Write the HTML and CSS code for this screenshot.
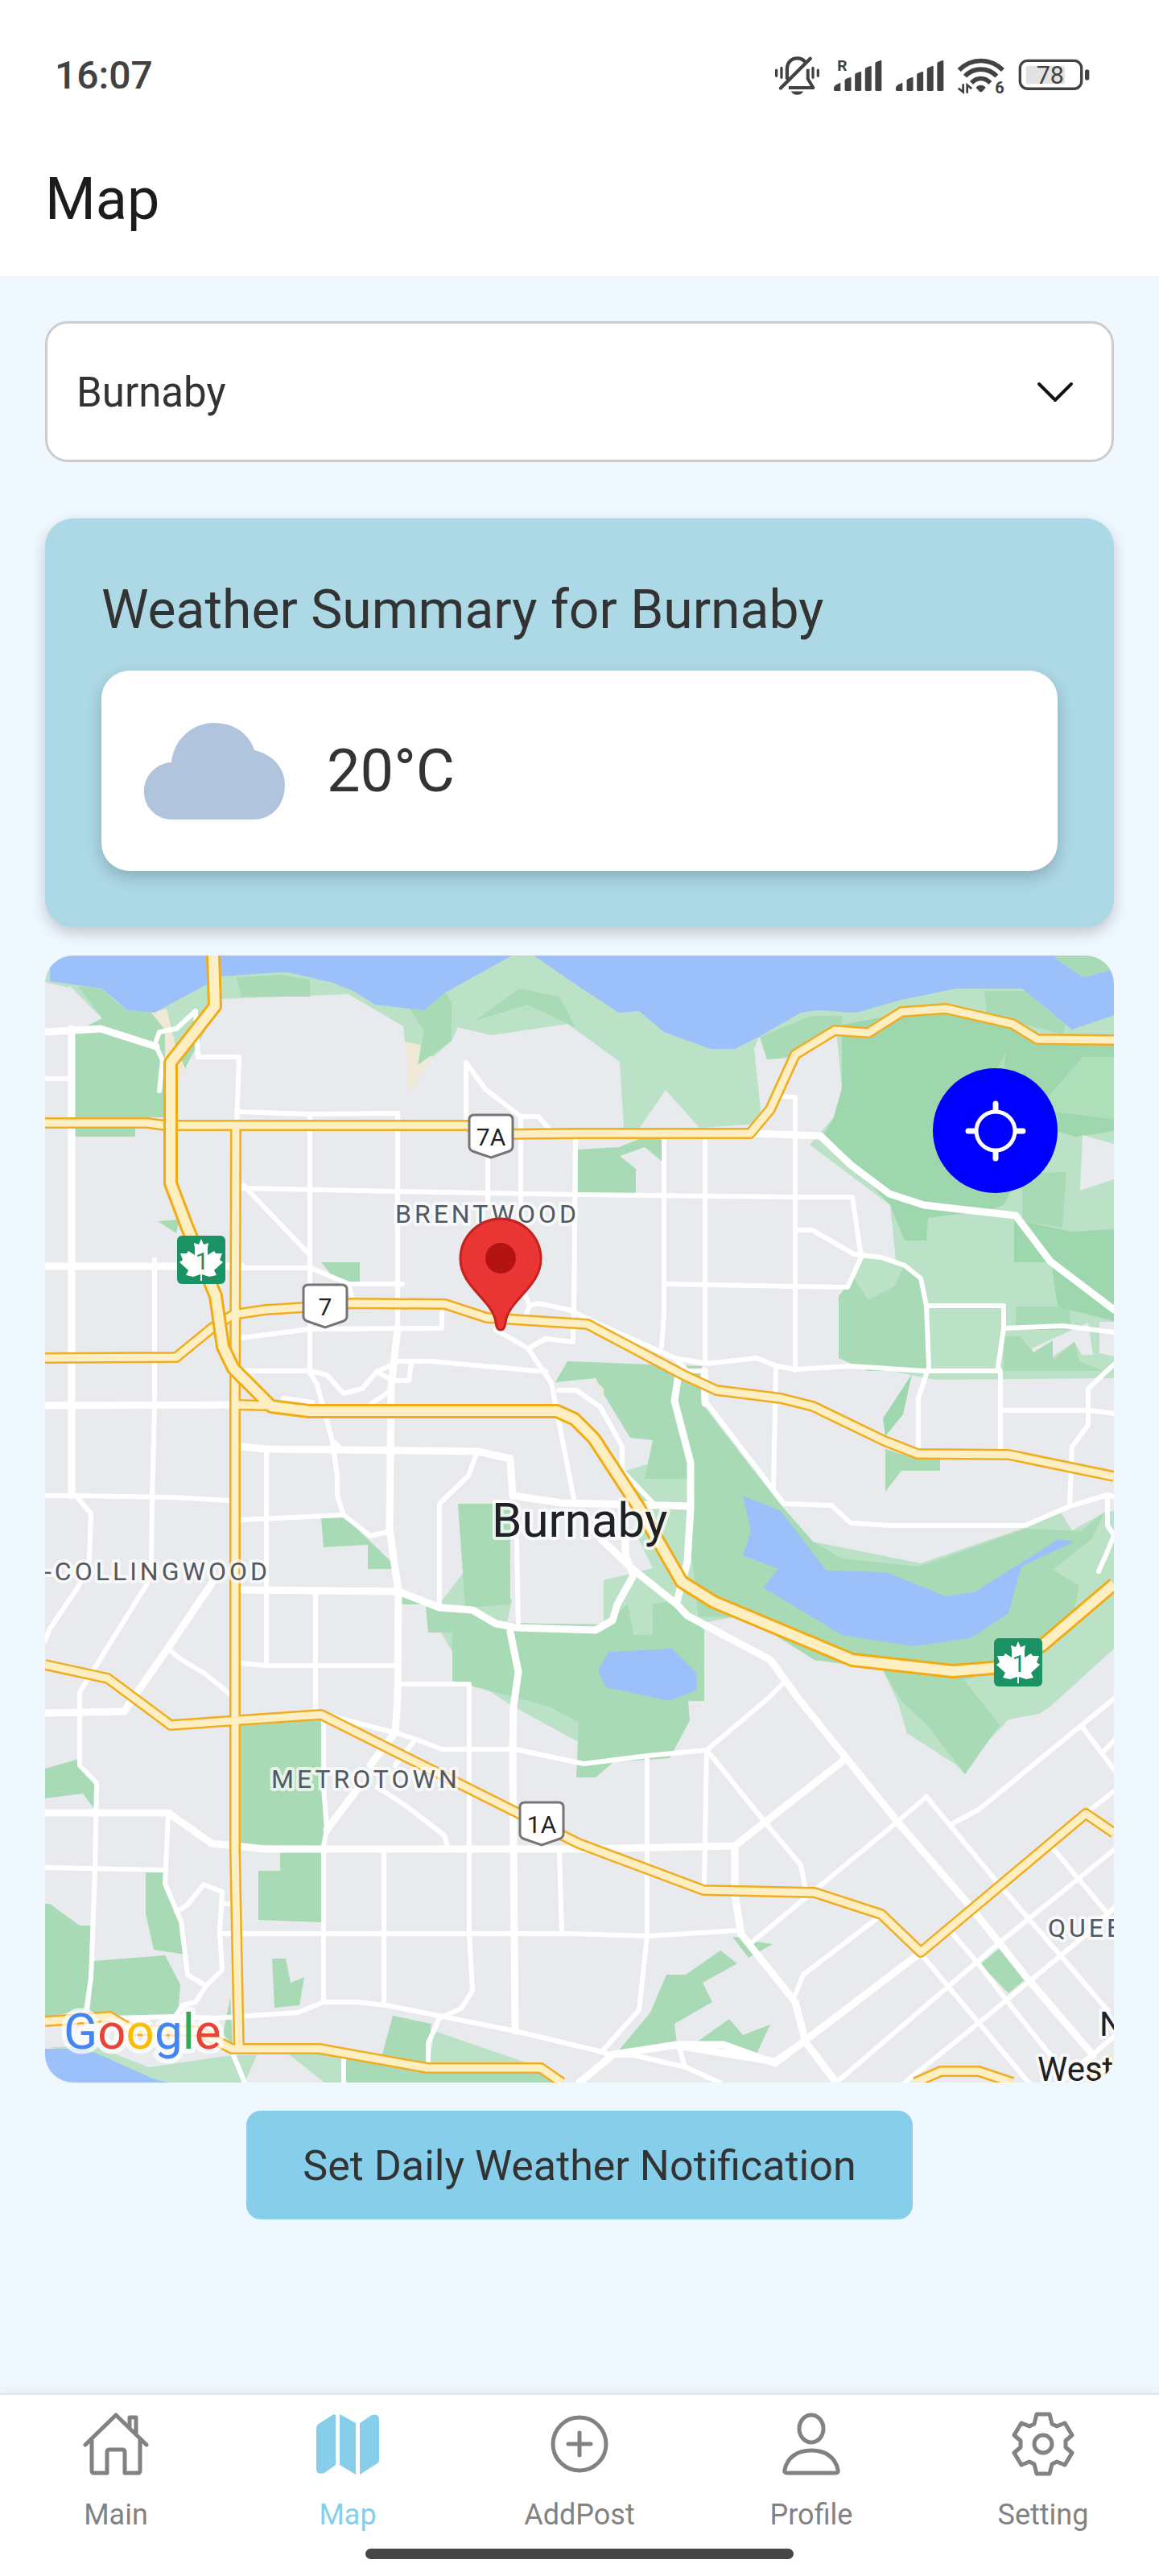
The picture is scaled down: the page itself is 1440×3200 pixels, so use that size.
FILE: index.html
```html
<!DOCTYPE html>
<html lang="en">
<head>
<meta charset="utf-8">
<meta name="viewport" content="width=device-width, initial-scale=1">
<title>Map</title>
<link rel="stylesheet" href="styles.css">
</head>
<body>
<div class="status-bar">
  <span class="status-time">16:07</span>
  <div class="status-icons">
    <svg class="status-icon" viewBox="64 58 172 150" width="57" height="50" aria-hidden="true">
      <g fill="none" stroke="#424242" stroke-linecap="round" stroke-linejoin="round">
        <path stroke-width="13" d="M112 142V108C112 84 128 68 150 68C163 68 173 73 180 82"/>
        <path stroke-width="13" d="M88 180L199 69"/>
        <path stroke-width="12" stroke-linecap="butt" d="M118 178H210L190 145V108"/>
        <path stroke-width="10" d="M72 112V134M91 104V140M209 104V140M228 112V134"/>
      </g>
      <path fill="#424242" d="M127 192H173C168 201 160 205 150 205S132 201 127 192Z"/>
    </svg>
    <svg class="status-icon" viewBox="286 58 184 150" width="61" height="50" aria-hidden="true">
      <text class="status-mini" x="302" y="115" font-size="58">R</text>
      <g fill="#424242">
        <path d="M289 182Q289 174 296 168L312 160Q314 159 314 162V190H293Q289 190 289 186Z"/>
        <path d="M330 152Q330 148 334 145L350 139Q354 138 354 142V186Q354 190 350 190H334Q330 190 330 186Z"/>
        <path d="M368 130Q368 126 372 124L388 118Q392 117 392 121V186Q392 190 388 190H372Q368 190 368 186Z"/>
        <path d="M406 109Q406 105 410 103L426 97Q430 96 430 100V186Q430 190 426 190H410Q406 190 406 186Z"/>
        <path d="M444 88Q444 84 448 82L464 76Q468 75 468 79V186Q468 190 464 190H448Q444 190 444 186Z"/>
      </g>
    </svg>
    <svg class="status-icon" viewBox="286 58 184 150" width="61" height="50" aria-hidden="true">
      <g fill="#424242">
        <path d="M289 182Q289 174 296 168L312 160Q314 159 314 162V190H293Q289 190 289 186Z"/>
        <path d="M330 152Q330 148 334 145L350 139Q354 138 354 142V186Q354 190 350 190H334Q330 190 330 186Z"/>
        <path d="M368 130Q368 126 372 124L388 118Q392 117 392 121V186Q392 190 388 190H372Q368 190 368 186Z"/>
        <path d="M406 109Q406 105 410 103L426 97Q430 96 430 100V186Q430 190 426 190H410Q406 190 406 186Z"/>
        <path d="M444 88Q444 84 448 82L464 76Q468 75 468 79V186Q468 190 464 190H448Q444 190 444 186Z"/>
      </g>
    </svg>
    <svg class="status-icon" viewBox="744 58 180 150" width="60" height="50" aria-hidden="true">
      <g fill="none" stroke="#424242" stroke-width="17">
        <path d="M752 112C798 66 868 66 915 112"/>
        <path d="M774 135C806 101 860 101 892 135"/>
        <path d="M798 160C818 138 848 138 868 160"/>
      </g>
      <path fill="#424242" d="M815 178C823 165 843 165 851 178L838 192Q833 196 828 192Z"/>
      <path fill="none" stroke="#424242" stroke-width="8" d="M767 164V194L749 180M782 198V168L799 182"/>
      <text class="status-mini" x="886" y="200" font-size="60">6</text>
    </svg>
    <svg class="status-icon" viewBox="976 58 268 150" width="89" height="50" role="img" aria-label="Battery">
      <rect x="1005" y="96" width="146" height="68" rx="10" fill="#e2e2e2"/>
      <rect x="983" y="77" width="230" height="105" rx="28" fill="none" stroke="#424242" stroke-width="10"/>
      <rect x="1226" y="110" width="16" height="40" rx="8" fill="#424242"/>
      <text class="status-level" x="1096" y="162" font-size="92" text-anchor="middle">78</text>
    </svg>
  </div>
</div>

<header class="page-header">
  <h1 class="page-title">Map</h1>
</header>

<main class="content">
  <div class="city-picker">
    <select class="city-select" aria-label="City">
      <option>Burnaby</option>
    </select>
    <svg class="city-chevron" viewBox="0 0 48 30" width="48" height="30" aria-hidden="true">
      <path d="M4 4L24 24L44 4" fill="none" stroke="#111" stroke-width="4" stroke-linecap="round" stroke-linejoin="round"/>
    </svg>
  </div>

  <section class="weather-card">
    <h2 class="weather-title">Weather Summary for Burnaby</h2>
    <div class="weather-now">
      <svg class="weather-icon" viewBox="0 0 175 120" width="175" height="120" aria-hidden="true">
        <path fill="#b0c4de" d="M34 120A34 34 0 0 1 0 84C0 67 14 50 34 49C37 20 60 0 87 0C112 0 131 14 137 34C160 39 175 56 175 77C175 101 160 120 136 120Z"/>
      </svg>
      <span class="weather-temp">20°C</span>
    </div>
  </section>

  <div class="map">
    <svg class="map-canvas" viewBox="0 0 1328 1400" role="img" aria-label="Map of Burnaby">
      <defs>
        <g id="hwy-trans-canada">
          <rect width="60" height="60" rx="6" fill="#1b9263"/>
          <path fill="#fff" d="M30 4L33 11L39 9L38 15L38 24L46 19L48 22L56 22L53 30L57 33L46 43L49 49L40 51L31 48V56H29V48L20 51L11 49L14 43L3 33L7 30L4 22L12 22L14 19L22 24L22 15L21 9L27 11Z"/>
        </g>
        <path id="hwy-shield" d="M7 1H49Q55 1 55 7V40Q55 44 51 46L28 54L5 46Q1 44 1 40V7Q1 1 7 1Z"/>
        <g id="yellow-roads">
          <path d="M0 208H127L149 211H524L560 222L664 221H876L901 191L932 123L981 93L1023 96L1064 70L1119 66L1202 85L1233 104L1328 105"/>
          <path d="M237 213L236 560V1110L238 1216L241 1360"/>
          <path d="M0 500L163 499L207 463L234 446L274 440L323 437L381 432L497 433L549 450L674 458L793 521L834 540L914 550L954 560L1043 603L1084 619L1197 620L1328 647"/>
          <path d="M236 558L274 559"/>
          <path d="M0 881L78 898L156 956L343 943L587 1065L663 1103L818 1161L956 1164L1039 1191L1088 1238L1293 1066L1328 1090"/>
          <path d="M0 1324L80 1318L109 1335L189 1336L232 1358H341L475 1382H616L642 1400"/>
          <path d="M1081 1400L1113 1386H1160L1202 1400M1328 1371L1296 1398"/>
        </g>
        <path id="freeway" d="M209 0L211 63L156 133V283L176 336L212 423L221 486L234 513L281 560L328 566H636L658 576L682 600L738 686L791 778L831 803L1003 875L1128 889L1200 883L1240 856L1328 781"/>
      </defs>

      <rect width="1328" height="1400" fill="#e8eaed"/>

      <g fill="#bbe2c6">
        <path d="M0 0H30V40L0 33ZM27 34L71 41L102 68L136 71L203 35L214 60L205 83L174 140L150 110L71 78Z"/>
        <path d="M218 20L300 18L410 50L580 0H610L690 30L860 100L887 101L881 116L889 191L887 209L813 214L771 167L738 215H719L714 132L684 110L649 85L554 99L513 89L505 106L482 126L447 107L445 88L377 48L218 54Z"/>
        <path d="M887 101L939 65L1132 35H1328V525L1106 527L1008 508L986 500V423L997 413L1012 376L1057 378L1050 310L950 235L980 201L990 165L983 93L923 127L897 129Z"/>
        <path d="M718 641L755 630L810 640V830L856 822L905 843L956 875L1041 888L1059 926L1071 966L1133 1006L1143 1017L1148 1001L1197 949L1235 942L1249 933L1328 861V690L1316 692L1276 714L1262 692L1213 712L1088 755L954 728L900 700L830 700L800 880H694V776L755 761L738 726Z"/>
        <path d="M492 803L520 766L580 800L574 830L700 830V850H506V865L492 841ZM551 913L580 932L661 976L680 930Z"/>
        <path d="M6 1356L62 1355L129 1381L232 1366H263L248 1400H130ZM303 1365H372V1400H347ZM484 1336L600 1376H477Z"/>
      </g>

      <g fill="#a8dab5">
        <path d="M41 38L71 41L91 60L102 68L132 71L149 93V201H37V91L51 88L71 78ZM37 214H112V225H37ZM186 90L203 80L174 140L166 120Z"/>
        <path d="M238 27L292 24L329 30V51H244ZM453 66L497 46L505 58V106L463 136L471 93ZM534 81L589 41L639 51L659 89L599 61Z"/>
        <path d="M1255 0H1328V17L1290 27L1255 3ZM889 101L952 75H990V86L941 125L897 129ZM1167 44H1218L1268 86L1264 98L1170 73Z"/>
        <path d="M662 241L713 238L738 228H767V256L745 238L714 249L734 265V295H662ZM140 330L167 328L163 345ZM343 381H391V406H363Z"/>
        <path d="M1004 400L1023 428L1055 411L1068 385L1088 400L1096 433L1098 516H1023L986 500V423ZM1206 436H1272L1275 465H1206ZM1191 473H1211L1228 493L1252 478V503L1279 480L1285 504L1314 516H1191ZM1214 271L1269 269L1264 338L1214 330Z"/>
        <path d="M649 504L634 530L684 525L694 545L727 599L755 602L745 650H800V730L807 773L811 821L856 822L905 843L956 875L1000 880L1041 888L1064 926L1095 955L1143 1017L1186 956L1142 900L1235 870L1278 816L1285 783L1252 763L1300 725L1316 692L1287 715L1218 712L1115 749L1085 759L990 749L954 728L912 680L816 556V510L751 508Z"/>
        <path d="M343 698L371 696L430 753V762H401V732L346 735ZM442 795L450 790L473 806H442ZM513 681H578V806L522 810Z"/>
        <path d="M473 808L531 813L560 828L684 832L694 830L724 806L731 844H755V806L785 800L819 838V926H799L801 950L776 997L706 1002L684 1021H660L663 953L627 933L551 913L506 901V841H476Z"/>
        <path d="M1044 613L1066 620L1112 625V640H1064L1044 666Z"/>
        <path d="M0 1010L42 998L62 1026L61 1060L47 1041L0 1047ZM243 953L343 950L345 1033L350 1086L345 1106L243 1105ZM292 1113H345V1201L265 1198V1137H292Z"/>
        <path d="M125 1139H149V1155L169 1200L174 1241L135 1235L125 1190ZM0 1178H6L43 1205H57V1266L51 1310L0 1318ZM61 1249L149 1242L168 1278L165 1316L55 1318ZM282 1246H299L305 1276L322 1269L316 1304L285 1307Z"/>
        <path d="M372 1373L375 1363L475 1386H616L631 1400H372ZM432 1317L480 1327L475 1376L419 1365ZM230 1295L233 1353L221 1340Z"/>
        <path d="M854 1219L865 1220L883 1225L904 1228L874 1245ZM839 1236L860 1252L817 1276L829 1300L782 1327L785 1351L713 1360L752 1313L772 1266H796ZM850 1321L867 1341L901 1328L884 1364L845 1351H808ZM1186 1233L1219 1271L1197 1289L1162 1253Z"/>
      </g>

      <g fill="#9ed7ae">
        <path d="M990 86L1064 72L1119 66L1202 85L1233 104L1328 105V126H1289L1247 175L1244 193L1328 203V218L1280 225L1240 213L1191 310L1175 316L1097 326L1095 354H1068L1050 310L968 221L980 201L990 165Z"/>
        <path d="M1204 328L1276 343L1328 340V454L1273 440L1258 435L1250 381H1204ZM1077 520L1066 570L1044 597L1041 575Z"/>
        <path fill="#aedfb9" d="M1289 126H1328V203L1244 193L1247 175ZM1194 120L1191 145H1180Z"/>
      </g>

      <g fill="#e8eaed">
        <path d="M1289 223L1328 234V278L1286 292ZM1226 488L1296 456L1302 496H1288L1279 480L1252 498V478L1228 493ZM1310 455H1328V498L1310 494Z"/>
      </g>

      <path fill="#f0e9d8" d="M132 71L151 66L163 116L174 140L163 163L149 160V92ZM447 107L467 111L463 136L482 126L453 170ZM680 524L694 538V548Z"/>

      <g fill="#9cc0f9">
        <path d="M6 0V32L71 41L102 68L136 71L203 35L218 26L288 21H303L357 34L381 43L410 61L471 68L497 46L580 0Z"/>
        <path d="M607 0L664 39L713 71L738 69L769 95L827 116H857L887 101L939 71L961 68L1008 71L1064 55L1132 41H1214L1276 92L1328 74V17L1290 27L1255 3V0Z"/>
        <path d="M700 865L779 861L809 891V912L776 926L697 909L687 888Z"/>
        <path d="M867 671L914 690L971 764L1045 766L1119 796L1156 790L1259 725L1279 728L1213 759L1197 817L1150 848L1079 858L990 844L892 785L911 762L867 745L877 715Z"/>
        <path d="M0 1358H51L62 1363L136 1396L154 1400H0Z"/>
      </g>

      <g class="street">
        <path d="M138 106L142 95L163 91L187 69L190 126H241L238 213M138 113L146 130L142 168M0 153H33"/>
        <path d="M238 194L328 197L438 196V463M329 197V518L338 533L357 603L363 646V671L371 695L404 721L430 715"/>
        <path d="M523 211V133L547 166L591 200H613L627 216M591 200V310M550 245V310M244 289L438 293L662 297L932 300H1003L1014 375L997 412L932 411L769 408"/>
        <path d="M659 225L657 450M247 286L328 371M244 388H330L377 408H444M377 408L383 430M136 378V560L133 673L132 753L127 780L43 915V1006L64 1028L62 1136L57 1270L51 1311"/>
        <path d="M769 228V446L766 486M820 228V506M916 175L932 176V515M932 341H953L1005 371L1039 375L1068 385L1088 401L1095 435L1098 511L1085 550V613"/>
        <path d="M1095 435H1191V463L1184 511L1187 517V613M1191 463L1265 460L1328 468M1187 565H1298L1328 569M1328 508L1296 538V583L1276 610L1273 683"/>
        <path d="M596 420L602 435L613 432L651 440L684 456L722 473L782 500L822 507L884 500L909 510L932 514L1001 510L1092 516H1186M602 435L596 450M782 500L798 516"/>
        <path d="M243 475L329 464L493 463V443M243 516H329L350 521L371 544L394 538L412 517L440 504H479L622 517M455 506L452 528H432L412 517M296 550L332 555M426 543L406 556M357 603L367 612"/>
        <path d="M560 465L600 488L629 531L658 680M600 488L622 476L656 480V466M638 540H660L690 561L717 610V640L758 683"/>
        <path d="M0 671H38L158 673L230 677M38 671L57 693L55 750L42 783L6 836L0 851M537 616L526 646L490 681V806M275 613V880M243 701L371 695M243 879L274 882H437M336 790V943"/>
        <path d="M439 905H527V1113V1213L531 1286L517 1308L490 1320L476 1351V1376M586 725L588 836M153 861L167 873L200 893L230 918"/>
        <path d="M153 1065L149 1153L169 1200L177 1266L200 1280L220 1260L217 1213L220 1163L197 1154L176 1180L163 1188M220 1178H236M200 1280L187 1300L171 1304L163 1316M0 1133L149 1136M220 1215H645L684 1216L749 1218L863 1211"/>
        <path d="M346 950V1033L350 1086L346 1106V1300M421 1113V1301M639 1113L642 1213M80 1320L163 1318L212 1320L314 1313L346 1300H386L424 1304L584 1336L684 1360L706 1366H731L796 1381L838 1400"/>
        <path d="M348 943L437 966L459 973L493 986H584L669 1004L749 994L822 987L898 923L918 903M459 975L435 1006M413 1033L448 1056L496 1093L500 1106M748 994V1218L738 1310L693 1360M822 987L819 1153M822 987L894 1076L939 1130L944 1156"/>
        <path d="M878 1226L1059 1076L1095 1045L1182 1150L1320 1310M1128 1078L1160 1061L1328 923M1287 956L1328 1011M1314 990L1328 975M1300 1060L1328 1038M1035 1195L942 1266L932 1291M1088 1240L1222 1400"/>
        <path d="M1126 1213L1160 1253L1193 1296L1249 1366M983 1400L1186 1226L1328 1111M1068 1400L1160 1326L1289 1220L1328 1183M1253 1110L1320 1190M1328 1343L1260 1400M787 1353L795 1381M234 1366L248 1400M371 1371V1400M684 1383L665 1400"/>
        <path d="M908 511L905 663M793 516H818L820 553L918 681L977 683L1001 705L1050 708H1218L1273 684L1320 670L1328 672M1320 670V708L1328 720L1320 740L1309 765"/>
      </g>
      <g class="street street-wide">
        <path d="M33 91V671M0 95L69 91L138 113M0 386H244M880 221L963 224L1001 260L1049 296L1092 310L1206 323L1249 380L1328 440"/>
        <path d="M438 463L430 536L428 713L439 790L438 923L435 965L404 1006M390 1033L350 1086M0 559L230 558"/>
        <path d="M243 610L274 613L537 616L578 625L581 671L642 680L684 681L802 684M243 788L439 790L490 810L531 813L560 830L587 835L684 838L705 826L711 806L731 770L721 746V723"/>
        <path d="M578 840L588 890L582 933L581 990L584 1336M207 780L153 860L104 930L99 939L0 941M0 1065H153L207 1103L274 1110H667L857 1106L992 1000M857 1106V1166L865 1216L932 1300L945 1350L983 1400"/>
        <path d="M691 725L731 763L785 806L798 820L901 875L936 923L1059 1076L1151 1183L1220 1270L1302 1366M787 520L782 553L802 630V686L798 753L785 803M819 516L820 556"/>
        <path d="M1086 1240L907 1376L843 1353H785L706 1365L664 1400M785 1354L907 1374L945 1348"/>
      </g>

      <use href="#yellow-roads" class="road-casing"/>
      <use href="#yellow-roads" class="road-fill"/>
      <use href="#freeway" class="freeway-casing"/>
      <use href="#freeway" class="freeway-fill"/>
      <path class="road-link" d="M240 558L276 559"/>

      <g transform="translate(164 348)"><use href="#hwy-trans-canada"/><text class="shield-text shield-green" x="31" y="42">1</text></g>
      <g transform="translate(1179 848)"><use href="#hwy-trans-canada"/><text class="shield-text shield-green" x="31" y="42">1</text></g>
      <g transform="translate(526 197)"><use href="#hwy-shield" class="shield"/><text class="shield-text" x="28" y="39">7A</text></g>
      <g transform="translate(320 408)"><use href="#hwy-shield" class="shield"/><text class="shield-text" x="28" y="39">7</text></g>
      <g transform="translate(589 1051)"><use href="#hwy-shield" class="shield"/><text class="shield-text" x="28" y="39">1A</text></g>

      <text class="area-label" x="435" y="332">BRENTWOOD</text>
      <text class="area-label" x="-1" y="776">-COLLINGWOOD</text>
      <text class="area-label" x="281" y="1034">METROTOWN</text>
      <text class="area-label" x="1246" y="1219">QUEE</text>
      <text class="city-label" x="555" y="722">Burnaby</text>
      <text class="town-label" x="1310" y="1342">N</text>
      <text class="town-label" x="1233" y="1398">West</text>

      <g class="pin">
        <path fill="#ea3535" stroke="#c5221f" stroke-width="3" d="M566 465C562 465 561 462 560 456C557 428 516 412 516 377A50 50 0 0 1 616 377C616 412 575 428 572 456C571 462 570 465 566 465Z"/>
        <circle cx="566" cy="376" r="19" fill="#b31412"/>
      </g>

      <text class="map-brand" x="23" y="1358"><tspan fill="#4285f4">G</tspan><tspan fill="#ea4335">o</tspan><tspan fill="#fbbc04">o</tspan><tspan fill="#4285f4">g</tspan><tspan fill="#34a853">l</tspan><tspan fill="#ea4335">e</tspan></text>
    </svg>
    <button class="locate-button" type="button" aria-label="My location">
      <svg viewBox="-39 -39 78 78" width="78" height="78" aria-hidden="true">
        <circle r="24" fill="none" stroke="#fff" stroke-width="5"/>
        <path d="M0 -34V-26M0 34V26M-34 0H-26M34 0H26" stroke="#fff" stroke-width="7" stroke-linecap="round"/>
      </svg>
    </button>
  </div>

  <button class="notify-button" type="button">Set Daily Weather Notification</button>
</main>

<footer class="tab-bar">
  <nav class="tabs" aria-label="Primary">
    <a class="tab" href="#main">
      <svg class="tab-icon" viewBox="0 0 82 82" width="82" height="82" aria-hidden="true">
        <path d="M3 42L41 5L79 42M11 35V74Q11 77 14 77H30V51Q30 48 33 48H49Q52 48 52 51V77H68Q71 77 71 74V35M58 20V8H66V28"/>
      </svg>
      Main
    </a>
    <a class="tab tab-active" href="#map" aria-current="page">
      <svg class="tab-icon tab-icon-solid" viewBox="0 0 78 82" width="78" height="82" aria-hidden="true">
        <path d="M3 16L20 5Q24 3 24 6V67L10 77Q0 80 0 72V21Q0 18 3 16ZM29 4L49 15V79L29 67ZM54 15L69 5Q78 3 78 11V63L76 65L54 79Z"/>
      </svg>
      Map
    </a>
    <a class="tab" href="#add-post">
      <svg class="tab-icon" viewBox="-41 -41 82 82" width="82" height="82" aria-hidden="true">
        <circle r="33"/><path d="M-14 0H14M0 -14V14"/>
      </svg>
      AddPost
    </a>
    <a class="tab" href="#profile">
      <svg class="tab-icon" viewBox="-41 -41 82 82" width="82" height="82" aria-hidden="true">
        <ellipse cy="-19" rx="15" ry="17"/>
        <path d="M-30 36Q-34 36 -33 32C-30 17 -18 8 0 8S30 17 33 32Q34 36 30 36Z"/>
      </svg>
      Profile
    </a>
    <a class="tab" href="#setting">
      <svg class="tab-icon" viewBox="-41 -41 82 82" width="82" height="82" aria-hidden="true">
        <path d="M-8 -37H8L11 -25L17 -22L27 -26L36 -11L28 -4V4L36 11L27 26L17 22L11 25L8 37H-8L-11 25L-17 22L-27 26L-36 11L-28 4V-4L-36 -11L-27 -26L-17 -22L-11 -25Z"/>
        <circle r="11"/>
      </svg>
      Setting
    </a>
  </nav>
  <div class="home-indicator"></div>
</footer>
</body>
</html>
```
FILE: styles.css
```css
* {
  box-sizing: border-box;
}

body {
  margin: 0;
  min-height: 100vh;
  display: flex;
  flex-direction: column;
  background: #f0f8ff;
  color: #333;
  font-family: Roboto, "Noto Sans", sans-serif;
}

button,
select {
  font: inherit;
  color: inherit;
}

.status-bar {
  display: flex;
  align-items: center;
  justify-content: space-between;
  padding: 64px 86px 0 68px;
  background: #fff;
}

.status-time {
  font-size: 48px;
  line-height: 60px;
  font-weight: 500;
  color: #424242;
}

.status-icons {
  display: flex;
  align-items: center;
  gap: 16px;
}

.status-icon {
  display: block;
}

.status-mini {
  fill: #424242;
  font-weight: 700;
}

.status-level {
  fill: #424242;
}

.page-header {
  padding: 82px 56px 53px;
  background: #fff;
}

.page-title {
  margin: 0;
  font-size: 72px;
  line-height: 84px;
  font-weight: 400;
  color: #1c1c1e;
}

.content {
  flex: 1;
  display: flex;
  flex-direction: column;
  padding: 56px;
}

.city-picker {
  position: relative;
  margin-bottom: 70px;
}

.city-select {
  display: block;
  width: 100%;
  height: 175px;
  padding: 2px 120px 0 36px;
  border: 3px solid #ccc;
  border-radius: 28px;
  background: #fff;
  font-size: 51px;
  appearance: none;
}

.city-chevron {
  position: absolute;
  right: 49px;
  top: 74px;
  pointer-events: none;
}

.weather-card {
  margin-bottom: 35px;
  padding: 72px 70px 70px;
  border-radius: 35px;
  background: #add8e6;
  box-shadow: 0 7px 18px rgba(0, 0, 0, 0.2);
}

.weather-title {
  margin: 0 0 33px;
  font-size: 66px;
  line-height: 84px;
  font-weight: 400;
}

.weather-now {
  display: flex;
  align-items: center;
  gap: 52px;
  height: 249px;
  padding: 0 53px;
  border-radius: 35px;
  background: #fff;
  box-shadow: 0 8px 20px rgba(0, 0, 0, 0.2);
}

.weather-temp {
  font-size: 74px;
  line-height: 84px;
}

.map {
  position: relative;
  margin-bottom: 35px;
  border-radius: 35px;
  overflow: hidden;
}

.map-canvas {
  display: block;
  width: 100%;
  height: auto;
}

.street {
  fill: none;
  stroke: #fff;
  stroke-width: 6px;
  stroke-linejoin: round;
  stroke-linecap: round;
}

.street-wide {
  stroke-width: 9px;
}

.road-casing,
.road-fill,
.freeway-casing,
.freeway-fill,
.road-link {
  fill: none;
  stroke-linejoin: round;
}

.road-casing {
  stroke: #f0ad22;
  stroke-width: 14px;
}

.road-fill {
  stroke: #feefc3;
  stroke-width: 9px;
}

.freeway-casing {
  stroke: #f3ab13;
  stroke-width: 18px;
}

.freeway-fill {
  stroke: #feefc3;
  stroke-width: 12px;
}

.road-link {
  stroke: #feefc3;
  stroke-width: 9px;
}

.shield {
  fill: #fff;
  stroke: #757575;
  stroke-width: 3px;
}

.shield-text {
  font-size: 30px;
  text-anchor: middle;
  fill: #202124;
}

.shield-green {
  fill: #1b9263;
}

.area-label,
.city-label,
.town-label,
.map-brand {
  paint-order: stroke;
  stroke: rgba(255, 255, 255, 0.7);
  stroke-width: 8px;
  stroke-linejoin: round;
}

.area-label {
  font-size: 32px;
  letter-spacing: 4px;
  fill: #55585d;
}

.city-label {
  font-size: 60px;
  fill: #202124;
}

.town-label {
  font-size: 42px;
  fill: #202124;
}

.map-brand {
  font-size: 62px;
  stroke-width: 12px;
}

.locate-button {
  position: absolute;
  top: 140px;
  right: 70px;
  width: 155px;
  height: 155px;
  display: flex;
  align-items: center;
  justify-content: center;
  padding: 0;
  border: 0;
  border-radius: 50%;
  background: #00f;
}

.notify-button {
  align-self: center;
  padding: 36px 70px 34px;
  border: 0;
  border-radius: 18px;
  background: #87ceeb;
  font-size: 52px;
  line-height: 65px;
}

.tab-bar {
  padding: 20px 0 21px;
  border-top: 2px solid #dfe5ea;
  background: #fff;
  box-shadow: 0 -3px 10px rgba(0, 0, 0, 0.05);
}

.tabs {
  display: flex;
}

.tab {
  flex: 1;
  display: flex;
  flex-direction: column;
  align-items: center;
  gap: 26px;
  font-size: 36px;
  line-height: 42px;
  color: #828282;
  text-decoration: none;
}

.tab-active {
  color: #87ceeb;
}

.tab-icon {
  fill: none;
  stroke: currentColor;
  stroke-width: 5px;
  stroke-linecap: round;
  stroke-linejoin: round;
}

.tab-icon-solid {
  fill: currentColor;
  stroke: none;
}

.home-indicator {
  width: 37%;
  height: 13px;
  margin: 21px auto 0;
  border-radius: 7px;
  background: #464646;
}
```
